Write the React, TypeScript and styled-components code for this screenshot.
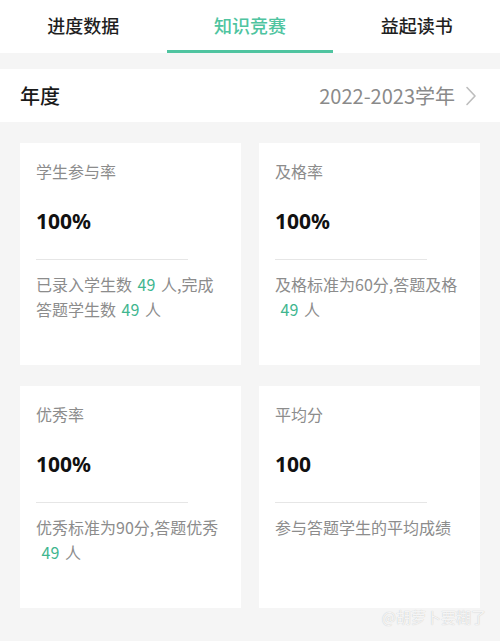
import React from 'react';
import styled, { createGlobalStyle, css } from 'styled-components';

const GlobalStyle = createGlobalStyle`
  html, body {
    margin: 0;
    padding: 0;
    background: #f5f5f5;
  }
  body {
    font-family: "Noto Sans CJK SC", "Noto Sans", sans-serif;
    -webkit-font-smoothing: antialiased;
  }
`;

const Page = styled.div`
  position: relative;
  width: 500px;
  height: 641px;
  background: #f5f5f5;
  overflow: hidden;
`;

const TabBar = styled.div`
  display: grid;
  grid-template-columns: repeat(3, 1fr);
  height: 53px;
  background: #ffffff;
`;

const Tab = styled.div<{ active?: boolean }>`
  display: flex;
  align-items: center;
  justify-content: center;
  padding-bottom: 1px;
  font-size: 18px;
  font-weight: 500;
  color: #1f1f1f;
  border-bottom: 3px solid transparent;
  box-sizing: border-box;
  ${props => props.active && css`
    color: #4fc4a0;
    border-bottom-color: #4fc4a0;
  `}
`;

const YearRow = styled.div`
  display: flex;
  align-items: center;
  justify-content: space-between;
  height: 53px;
  margin-top: 16px;
  padding: 0 23px 0 20px;
  background: #ffffff;
`;

const YearLabel = styled.div`
  font-size: 20px;
  font-weight: 500;
  color: #1a1a1a;
`;

const YearValue = styled.div`
  display: flex;
  align-items: center;
  gap: 10px;
  font-size: 20px;
  color: #8a8a8a;
`;

const Grid = styled.div`
  display: grid;
  grid-template-columns: 221px 221px;
  grid-auto-rows: 222px;
  column-gap: 18px;
  row-gap: 21px;
  padding: 21px 20px 0;
`;

const Card = styled.div`
  display: flex;
  flex-direction: column;
  background: #ffffff;
  padding: 16px 16px 0;
`;

const CardTitle = styled.div`
  font-size: 16px;
  line-height: 24px;
  color: #8c8c8c;
`;

const CardValue = styled.div`
  margin-top: 23px;
  font-family: "Noto Sans", sans-serif;
  font-size: 21px;
  line-height: 30px;
  font-weight: 700;
  color: #111111;
`;

const Divider = styled.div`
  width: 152px;
  height: 1px;
  margin-top: 23px;
  background: #e6e6e6;
`;

const CardDesc = styled.div`
  margin-top: 12px;
`;

const DescLine = styled.div`
  font-size: 16px;
  line-height: 25px;
  color: #8c8c8c;
  white-space: pre;
`;

const Num = styled.span`
  color: #3fb68f;
  padding: 0 2px;
`;

const Watermark = styled.div`
  position: absolute;
  right: 14px;
  bottom: 14px;
  font-size: 15px;
  color: rgba(255, 255, 255, 0.85);
  text-shadow: 0 0 1px rgba(0, 0, 0, 0.25);
`;

const Chevron = () => (
  <svg width="12" height="20" viewBox="0 0 12 20" fill="none">
    <path d="M2 1.5L10 10L2 18.5" stroke="#bdbdbd" strokeWidth="1.6" strokeLinecap="round" strokeLinejoin="round" />
  </svg>
);

const tabs = ['进度数据', '知识竞赛', '益起读书'];

const stats = [
  {
    title: '学生参与率',
    value: '100%',
    lines: [
      <>已录入学生数 <Num>49</Num> 人,完成</>,
      <>答题学生数 <Num>49</Num> 人</>,
    ],
  },
  {
    title: '及格率',
    value: '100%',
    lines: [
      <>及格标准为60分,答题及格</>,
      <> <Num>49</Num> 人</>,
    ],
  },
  {
    title: '优秀率',
    value: '100%',
    lines: [
      <>优秀标准为90分,答题优秀</>,
      <> <Num>49</Num> 人</>,
    ],
  },
  {
    title: '平均分',
    value: '100',
    lines: [<>参与答题学生的平均成绩</>],
  },
];

export default function App() {
  return (
    <Page>
      <GlobalStyle />
      <TabBar>
        {tabs.map((tab, i) => (
          <Tab key={tab} active={i === 1}>{tab}</Tab>
        ))}
      </TabBar>
      <YearRow>
        <YearLabel>年度</YearLabel>
        <YearValue>
          2022-2023学年
          <Chevron />
        </YearValue>
      </YearRow>
      <Grid>
        {stats.map(stat => (
          <Card key={stat.title}>
            <CardTitle>{stat.title}</CardTitle>
            <CardValue>{stat.value}</CardValue>
            <Divider />
            <CardDesc>
              {stat.lines.map((line, i) => (
                <DescLine key={i}>{line}</DescLine>
              ))}
            </CardDesc>
          </Card>
        ))}
      </Grid>
      <Watermark>@胡萝卜要糊了</Watermark>
    </Page>
  );
}
